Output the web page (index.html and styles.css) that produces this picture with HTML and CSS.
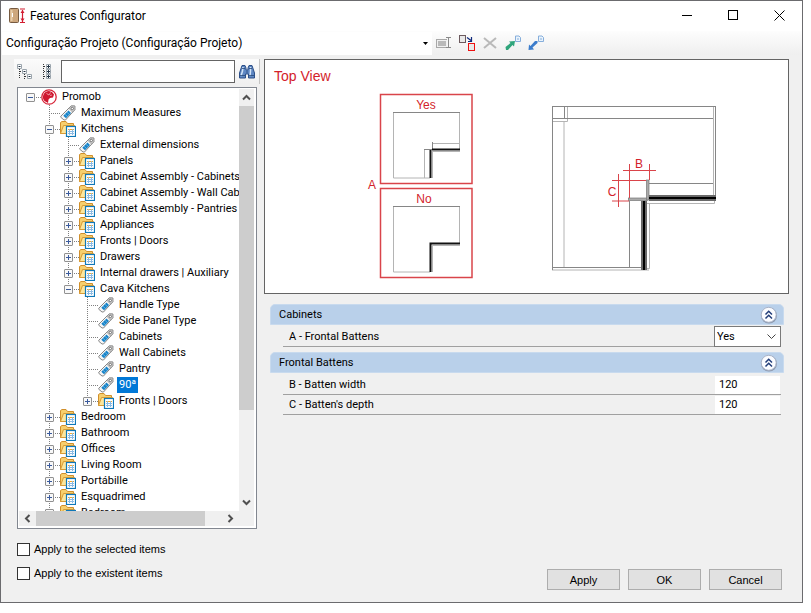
FILE: index.html
```html
<!DOCTYPE html>
<html lang="en">
<head>
    <meta charset="UTF-8">
    <meta name="viewport" content="width=device-width, initial-scale=1.0">
    <title>Features Configurator</title>
    <link rel="stylesheet" href="styles.css">
</head>
<body>
    <!-- Shared icons -->
    <svg class="sprite" aria-hidden="true">
        <symbol id="icon-tag" viewBox="0 0 16 16">
            <path d="M.8 11.200 9 3 11 1H14.800V4.800L5.500 15H4L.8 12.300Z" fill="#f6f6f6" stroke="#858585"/>
            <path d="M8.800 3.200 11.200 1H14.800V4.800L12.600 7.200Z" fill="#cfcfcf" stroke="#858585" stroke-width=".6"/>
            <path d="M3.300 10.800 8.500 5.500 11 8 6 13.200Z" fill="#1683c9"/>
            <path d="M5 9.200 7.500 11.700M7 7.200 9.400 9.700" stroke="#8cc5e8" stroke-width=".7"/>
            <circle cx="12.300" cy="3.500" r="1.200" fill="#fff" stroke="#666" stroke-width=".9"/>
        </symbol>
        <symbol id="icon-folder" viewBox="0 0 16 16">
            <path d="M.5 12.500V1.500L2 .5H6L7.500 2.500H13.500V12.500Z" fill="#f7cf6d" stroke="#d08f2c"/>
            <path d="M.5 12.500 3.500 4.500H14.500V12.500Z" fill="#fce69c" stroke="#d79b35"/>
            <rect x="6.500" y="5.500" width="9" height="10" fill="#fff" stroke="#0f78b8" stroke-width="1.200"/>
            <path d="M8 8.500H14" stroke="#f0a92e"/>
            <path d="M8 10.500H14M8 12.500H14M9.500 8V14M12.500 8V14" stroke="#8dbbe3"/>
        </symbol>
        <symbol id="icon-up" viewBox="0 0 18 18">
            <circle cx="9" cy="9.500" r="8" fill="#8c98ad"/>
            <circle cx="8.700" cy="8.800" r="7.500" fill="#fbfcff" stroke="#a9b3c8"/>
            <path d="M5.500 8.500 8.700 5.300 12 8.500M5.500 12.500 8.700 9.300 12 12.500" fill="none" stroke="#213c78" stroke-width="1.500"/>
        </symbol>
    </svg>

    <div class="window">
        <header class="titlebar">
            <svg class="app-icon" viewBox="0 0 17 16">
                <rect x=".5" y=".5" width="9" height="14" rx="1" fill="#cda77d" stroke="#765a40"/>
                <path d="M2.500 2V13" stroke="#e7cda9" stroke-width="2"/>
                <path d="M3.500 5V9" stroke="#fff"/>
                <path d="M11 1H16M11 14.500H16M13.500 2V14" stroke="#d21c30" stroke-width="1.200"/>
                <path d="M11.500 5 13.500 2 15.500 5ZM11.500 10.500 13.500 13.500 15.500 10.500Z" fill="#d21c30"/>
            </svg>
            <h1 class="title">Features Configurator</h1>
            <div class="window-controls">
                <button type="button" aria-label="Minimize"><svg viewBox="0 0 11 11"><path d="M0 5.500H10"/></svg></button>
                <button type="button" aria-label="Maximize"><svg viewBox="0 0 11 11"><rect x=".5" y=".5" width="9" height="9"/></svg></button>
                <button type="button" aria-label="Close"><svg viewBox="0 0 11 11"><path d="M.5 .5 10.500 10.500M10.500 .5 .5 10.500"/></svg></button>
            </div>
        </header>

        <div class="toolbar">
            <select class="project-select" aria-label="Project">
                <option>Configuração Projeto (Configuração Projeto)</option>
            </select>
            <button type="button" class="tool-btn" aria-label="Rename">
                <svg viewBox="0 0 18 18">
                    <rect x="1.500" y="5.500" width="12" height="8" fill="#f0f0f0" stroke="#a8a8a8"/>
                    <rect x="3" y="7" width="8" height="5" fill="#b9b9b9"/>
                    <path d="M13.500 4V13" stroke="#f6f6f6" stroke-width="3"/>
                    <path d="M11 3.500H16M11 13.500H16M13.500 4V13" stroke="#8a8a8a"/>
                </svg>
            </button>
            <button type="button" class="tool-btn" aria-label="Replace">
                <svg viewBox="0 0 18 18">
                    <rect x="1.500" y="1.500" width="6" height="7" fill="#e9e9e9" stroke="#6c5a5e"/>
                    <rect x="10.500" y="9.500" width="6" height="7" fill="#e9e9e9" stroke="#ee1111"/>
                    <path d="M9 3.500 13 6.500M13.500 3V7.500H10" fill="none" stroke="#102a7c" stroke-width="1.200"/>
                </svg>
            </button>
            <button type="button" class="tool-btn" aria-label="Delete">
                <svg viewBox="0 0 18 18">
                    <path d="M3 4 15 14M15 4 3 14" stroke="#b9b9b9" stroke-width="2"/>
                </svg>
            </button>
            <button type="button" class="tool-btn" aria-label="Export">
                <svg viewBox="0 0 18 18">
                    <path d="M11.500 2H15L16.500 3.500V7.500H11.500Z" fill="#e9f3fc" stroke="#86aedb"/>
                    <path d="M13 5H15" stroke="#86aedb"/>
                    <path d="M1.500 13 6.500 9 5 7.500 11 7 10 12.500 8.500 11 4 16 2 16Z" fill="#2fa57b"/>
                </svg>
            </button>
            <button type="button" class="tool-btn" aria-label="Import">
                <svg viewBox="0 0 18 18">
                    <path d="M11.500 2H15L16.500 3.500V7.500H11.500Z" fill="#e9f3fc" stroke="#86aedb"/>
                    <path d="M13 5H15" stroke="#86aedb"/>
                    <path d="M1.500 16 2 10.500 3.500 12 8 7 10.500 7 10.500 9 5.500 13.500 7 15.500Z" fill="#3c7dcc"/>
                </svg>
            </button>
        </div>

        <main class="content">
            <section class="sidebar">
                <div class="search-row">
                    <div class="tree-tools">
                        <button type="button" aria-label="Expand tree">
                            <svg viewBox="0 0 16 16">
                                <path d="M2.500 5V15M7.500 10V15" stroke="#333" stroke-dasharray="1 1"/>
                                <path d="M3 7.500H6M8 12.500H11" stroke="#333" stroke-dasharray="1 1"/>
                                <path d="M.5 .5H4.500V4.500H.5ZM5.500 5.500H9.500V9.500H5.500ZM10.500 10.500H14.500V14.500H10.500Z" fill="#fff" stroke="#9ba5ad"/>
                                <path d="M1.500 2.500H3.500M6.500 7.500H8.500M11.500 12.500H13.500" stroke="#234"/>
                            </svg>
                        </button>
                        <button type="button" aria-label="Collapse tree">
                            <svg viewBox="0 0 16 16">
                                <path d="M4.500 0V16" stroke="#333" stroke-dasharray="1 1"/>
                                <path d="M5 2.500H8M5 7.500H8M5 12.500H8" stroke="#333" stroke-dasharray="1 1"/>
                                <path d="M7.500 .5H11.500V4.500H7.500ZM7.500 5.500H11.500V9.500H7.500ZM7.500 10.500H11.500V14.500H7.500Z" fill="#fff" stroke="#9ba5ad"/>
                                <path d="M8 2.500H11M9.500 1V4M8 7.500H11M9.500 6V9M8 12.500H11M9.500 11V14" stroke="#234"/>
                            </svg>
                        </button>
                    </div>
                    <input class="search-input" type="text" aria-label="Search">
                    <button type="button" class="search-btn" aria-label="Find">
                        <svg viewBox="0 0 16 14">
                            <path d="M3 .5H6L7 3V5H9V3L10 .5H13L15.500 8V13H9.500V9H6.500V13H.5V8Z" fill="#5f88c4" stroke="#2c4f88"/>
                            <path d="M4 2 3.500 6 2 11M11.500 2 11.500 6 11 11" fill="none" stroke="#d3e4f7" stroke-width="1.500"/>
                            <path d="M1 10.500H6M10 10.500H15M7 7H9M3 3.500H6M10 3.500H13" stroke="#264779" stroke-width=".8"/>
                        </svg>
                    </button>
                </div>

                <div class="tree-box">
                    <div class="tree-view">
                        <ul class="tree">
                            <li>
                                <div class="node">
                                    <button type="button" class="toggle open" aria-label="Collapse"></button>
                                    <svg class="icon" viewBox="0 0 16 16">
                                        <circle cx="8" cy="8" r="7.200" fill="#fff" stroke="#d7263a" stroke-width="1.300"/>
                                        <path d="M8 2A6 6 0 0 0 3.500 12L7 14 7.500 10.500 9 9 12 8.500 13 5.500 11 3Z" fill="#cf1830"/>
                                        <path d="M5.500 4.500 8 6 9.500 3.500M9 6.500 11 6" fill="none" stroke="#f5b5bb" stroke-width=".8"/>
                                    </svg>
                                    <span class="label">Promob</span>
                                </div>
                                <ul>
                                    <li><div class="node leaf"><svg class="icon"><use href="#icon-tag"/></svg><span class="label">Maximum Measures</span></div></li>
                                    <li>
                                        <div class="node"><button type="button" class="toggle open" aria-label="Collapse"></button><svg class="icon"><use href="#icon-folder"/></svg><span class="label">Kitchens</span></div>
                                        <ul>
                                            <li><div class="node leaf"><svg class="icon"><use href="#icon-tag"/></svg><span class="label">External dimensions</span></div></li>
                                            <li><div class="node"><button type="button" class="toggle" aria-label="Expand"></button><svg class="icon"><use href="#icon-folder"/></svg><span class="label">Panels</span></div></li>
                                            <li><div class="node"><button type="button" class="toggle" aria-label="Expand"></button><svg class="icon"><use href="#icon-folder"/></svg><span class="label">Cabinet Assembly - Cabinets</span></div></li>
                                            <li><div class="node"><button type="button" class="toggle" aria-label="Expand"></button><svg class="icon"><use href="#icon-folder"/></svg><span class="label">Cabinet Assembly - Wall Cabinets</span></div></li>
                                            <li><div class="node"><button type="button" class="toggle" aria-label="Expand"></button><svg class="icon"><use href="#icon-folder"/></svg><span class="label">Cabinet Assembly - Pantries</span></div></li>
                                            <li><div class="node"><button type="button" class="toggle" aria-label="Expand"></button><svg class="icon"><use href="#icon-folder"/></svg><span class="label">Appliances</span></div></li>
                                            <li><div class="node"><button type="button" class="toggle" aria-label="Expand"></button><svg class="icon"><use href="#icon-folder"/></svg><span class="label">Fronts | Doors</span></div></li>
                                            <li><div class="node"><button type="button" class="toggle" aria-label="Expand"></button><svg class="icon"><use href="#icon-folder"/></svg><span class="label">Drawers</span></div></li>
                                            <li><div class="node"><button type="button" class="toggle" aria-label="Expand"></button><svg class="icon"><use href="#icon-folder"/></svg><span class="label">Internal drawers | Auxiliary</span></div></li>
                                            <li>
                                                <div class="node"><button type="button" class="toggle open" aria-label="Collapse"></button><svg class="icon"><use href="#icon-folder"/></svg><span class="label">Cava Kitchens</span></div>
                                                <ul>
                                                    <li><div class="node leaf"><svg class="icon"><use href="#icon-tag"/></svg><span class="label">Handle Type</span></div></li>
                                                    <li><div class="node leaf"><svg class="icon"><use href="#icon-tag"/></svg><span class="label">Side Panel Type</span></div></li>
                                                    <li><div class="node leaf"><svg class="icon"><use href="#icon-tag"/></svg><span class="label">Cabinets</span></div></li>
                                                    <li><div class="node leaf"><svg class="icon"><use href="#icon-tag"/></svg><span class="label">Wall Cabinets</span></div></li>
                                                    <li><div class="node leaf"><svg class="icon"><use href="#icon-tag"/></svg><span class="label">Pantry</span></div></li>
                                                    <li><div class="node leaf"><svg class="icon"><use href="#icon-tag"/></svg><span class="label selected">90ª</span></div></li>
                                                    <li><div class="node"><button type="button" class="toggle" aria-label="Expand"></button><svg class="icon"><use href="#icon-folder"/></svg><span class="label">Fronts | Doors</span></div></li>
                                                </ul>
                                            </li>
                                        </ul>
                                    </li>
                                    <li><div class="node"><button type="button" class="toggle" aria-label="Expand"></button><svg class="icon"><use href="#icon-folder"/></svg><span class="label">Bedroom</span></div></li>
                                    <li><div class="node"><button type="button" class="toggle" aria-label="Expand"></button><svg class="icon"><use href="#icon-folder"/></svg><span class="label">Bathroom</span></div></li>
                                    <li><div class="node"><button type="button" class="toggle" aria-label="Expand"></button><svg class="icon"><use href="#icon-folder"/></svg><span class="label">Offices</span></div></li>
                                    <li><div class="node"><button type="button" class="toggle" aria-label="Expand"></button><svg class="icon"><use href="#icon-folder"/></svg><span class="label">Living Room</span></div></li>
                                    <li><div class="node"><button type="button" class="toggle" aria-label="Expand"></button><svg class="icon"><use href="#icon-folder"/></svg><span class="label">Portábille</span></div></li>
                                    <li><div class="node"><button type="button" class="toggle" aria-label="Expand"></button><svg class="icon"><use href="#icon-folder"/></svg><span class="label">Esquadrimed</span></div></li>
                                    <li><div class="node"><button type="button" class="toggle" aria-label="Expand"></button><svg class="icon"><use href="#icon-folder"/></svg><span class="label">Bedroom</span></div></li>
                                </ul>
                            </li>
                        </ul>
                    </div>
                    <div class="scroll scroll-y">
                        <svg viewBox="0 0 15 16"><path d="M4 10 7.500 6.500 11 10"/></svg>
                        <div class="thumb"></div>
                        <svg viewBox="0 0 15 16"><path d="M4 6 7.500 9.500 11 6"/></svg>
                    </div>
                    <div class="scroll scroll-x">
                        <svg viewBox="0 0 16 15"><path d="M10 4 6.500 7.500 10 11"/></svg>
                        <div class="thumb"></div>
                        <svg viewBox="0 0 16 15"><path d="M6 4 9.500 7.500 6 11"/></svg>
                    </div>
                </div>
            </section>

            <section class="details">
                <figure class="preview">
                    <svg viewBox="0 0 523 233">
                        <text class="red heading" x="9" y="21">Top View</text>

                        <!-- A: option boxes -->
                        <g class="red-line box">
                            <rect x="115.500" y="34.500" width="91.500" height="89"/>
                            <rect x="115.500" y="128.500" width="91.500" height="89"/>
                        </g>
                        <text class="red" x="103" y="129">A</text>
                        <text class="red" x="161" y="49" text-anchor="middle">Yes</text>
                        <text class="red" x="159" y="143" text-anchor="middle">No</text>

                        <g class="gray-line">
                            <path d="M128.500 52.500V118M194.500 52.500V90M128.500 118H165M159.500 90V118M167.500 91V118M167.500 83.500H194M167 91.500H195"/>
                            <path d="M128.500 146.500V212M194.500 146.500V183M128.500 212H165M167.500 185V212M167 185.500H195"/>
                        </g>
                        <g class="dark-line">
                            <path d="M128 52.500H195M128 146.500H195M159 89.500H167M167.500 82V90"/>
                        </g>
                        <path class="thick" d="M167 89.500H195M165.500 90V118M164.500 183.500H195M165.500 183.500V212"/>

                        <!-- B / C: dimension drawing -->
                        <g class="gray-line">
                            <path d="M299 61V207M448.500 46V136M302.500 46V61.500H287.500M287 210H384M384.500 144V208.500H382M382 143.500H449.500V140"/>
                        </g>
                        <g class="dark-line">
                            <path d="M287.500 46V210M450.500 46V136M287 46.500H451M287 58.500H448M299.500 46V58M287 207.500H377M364.500 141V207M384 123.500H448"/>
                        </g>
                        <rect x="363.500" y="138" width="19" height="2.500" fill="#aaa" stroke="#777" stroke-width=".7"/>
                        <rect x="381.500" y="120" width="2.500" height="20" fill="#aaa" stroke="#777" stroke-width=".7"/>
                        <rect x="384" y="135" width="67" height="6" fill="#6a6a6a"/>
                        <rect x="384" y="137" width="67" height="2" fill="#000"/>
                        <rect x="376" y="141" width="6" height="69" fill="#6a6a6a"/>
                        <rect x="378" y="141" width="2" height="69" fill="#000"/>
                        <path class="red-line" d="M358 110.500H391M364.500 104V138M384.500 104V120M347 120.500H381M347 141H364M353.500 114V147"/>
                        <text class="red" x="374" y="108" text-anchor="middle">B</text>
                        <text class="red" x="347" y="136" text-anchor="middle">C</text>
                    </svg>
                </figure>

                <div class="properties">
                    <section class="group">
                        <div class="group-header">
                            <h2>Cabinets</h2>
                            <button type="button" aria-label="Collapse Cabinets"><svg><use href="#icon-up"/></svg></button>
                        </div>
                        <div class="group-body">
                            <div class="prop">
                                <label for="prop-a">A - Frontal Battens</label>
                                <select id="prop-a">
                                    <option>Yes</option>
                                    <option>No</option>
                                </select>
                            </div>
                        </div>
                    </section>
                    <section class="group">
                        <div class="group-header">
                            <h2>Frontal Battens</h2>
                            <button type="button" aria-label="Collapse Frontal Battens"><svg><use href="#icon-up"/></svg></button>
                        </div>
                        <div class="group-body">
                            <div class="prop">
                                <label for="prop-b">B - Batten width</label>
                                <input id="prop-b" type="text" value="120">
                            </div>
                            <div class="prop">
                                <label for="prop-c">C - Batten's depth</label>
                                <input id="prop-c" type="text" value="120">
                            </div>
                        </div>
                    </section>
                </div>
            </section>
        </main>

        <footer class="footer">
            <div class="options">
                <label><input type="checkbox">Apply to the selected items</label>
                <label><input type="checkbox">Apply to the existent items</label>
            </div>
            <div class="actions">
                <button type="button">Apply</button>
                <button type="button">OK</button>
                <button type="button">Cancel</button>
            </div>
        </footer>
    </div>
</body>
</html>
```
FILE: styles.css
```css
* {
    margin: 0;
    padding: 0;
    box-sizing: border-box;
}

body {
    background-color: #fff;
    padding: 0 8px 10px 0;
    font-family: 'Liberation Sans', Arial, sans-serif;
    font-size: 11px;
    color: #000;
}

button,
input,
select {
    font: inherit;
    color: inherit;
}

.sprite {
    display: none;
}

.window {
    display: flex;
    flex-direction: column;
    height: calc(100vh - 10px);
    border: 1px solid #6b6b6e;
    background-color: #f0f0f0;
}

/* Title bar */
.titlebar {
    display: flex;
    align-items: center;
    height: 30px;
    padding-left: 8px;
    background-color: #fff;
}

.app-icon {
    width: 17px;
    height: 16px;
}

.title {
    flex: 1;
    margin-left: 4px;
    font-family: Roboto, 'Noto Sans', sans-serif;
    font-size: 12px;
    font-weight: normal;
}

.window-controls {
    display: flex;
}

.window-controls button {
    width: 46px;
    height: 28px;
    border: none;
    background: none;
}

.window-controls svg {
    width: 11px;
    height: 11px;
    fill: none;
    stroke: #000;
}

/* Toolbar */
.toolbar {
    display: flex;
    align-items: center;
    height: 24px;
    padding-left: 1px;
    background: linear-gradient(#fdfdfd, #efefef);
}

.project-select {
    width: 430px;
    height: 23px;
    padding-left: 4px;
    border: none;
    appearance: none;
    background: #fff url("data:image/svg+xml,%3Csvg xmlns='http://www.w3.org/2000/svg' width='5' height='3'%3E%3Cpath d='M0 0H5L2.5 3Z'/%3E%3C/svg%3E") no-repeat right 4px center;
    font-family: Roboto, 'Noto Sans', sans-serif;
    font-size: 12px;
}

.tool-btn {
    width: 23px;
    height: 22px;
    border: none;
    background: none;
}

.tool-btn svg {
    display: block;
    width: 18px;
    height: 18px;
    margin: 0 auto;
    fill: none;
}

/* Main area */
.content {
    display: grid;
    grid-template-columns: 246px 1fr;
    gap: 4px;
    flex: 1;
    min-height: 0;
    padding: 4px 13px 0;
}

.sidebar {
    display: flex;
    flex-direction: column;
    min-height: 0;
}

.search-row {
    display: flex;
    align-items: center;
    height: 25px;
    margin-bottom: 3px;
    border-right: 1px solid #c4c4c4;
    background: linear-gradient(#fbfbfb, #f0f0f0);
}

.tree-tools {
    display: flex;
    gap: 6px;
    width: 47px;
    padding-left: 3px;
}

.tree-tools button,
.search-btn {
    border: none;
    background: none;
}

.tree-tools svg {
    display: block;
    width: 16px;
    height: 16px;
}

.search-input {
    flex: 1;
    min-width: 0;
    height: 23px;
    padding: 0 4px;
    border: 1px solid #646464;
    background-color: #fff;
}

.search-btn {
    width: 24px;
}

.search-btn svg {
    display: block;
    width: 16px;
    height: 14px;
    margin: 0 auto;
}

/* Tree */
.tree-box {
    display: grid;
    grid-template-columns: 1fr 15px;
    grid-template-rows: 1fr 15px;
    flex: 1;
    min-height: 0;
    margin: 0 3px;
    padding: 1px 2px 2px 1px;
    border: 1px solid #828790;
    background-color: #fff;
    font-family: Roboto, Arial, sans-serif;
}

.tree-view {
    overflow: hidden;
}

.tree,
.tree ul {
    list-style: none;
}

.tree ul {
    padding-left: 19px;
}

.tree ul > li {
    background: repeating-linear-gradient(#808080 0 1px, transparent 1px 2px) no-repeat 11px 0 / 1px 100%;
}

.tree ul ul > li:last-child {
    background-size: 1px 8px;
}

.node {
    display: flex;
    align-items: center;
    height: 16px;
    padding-left: 7px;
    white-space: nowrap;
    background: repeating-linear-gradient(90deg, #808080 0 1px, transparent 1px 2px) no-repeat 11px 8px / 11px 1px;
}

.node.leaf {
    padding-left: 22px;
}

.toggle {
    flex: none;
    width: 9px;
    height: 9px;
    margin-right: 6px;
    border: 1px solid #919191;
    border-radius: 1px;
    background:
        linear-gradient(#3a5a9c, #3a5a9c) no-repeat center / 5px 1px,
        linear-gradient(#3a5a9c, #3a5a9c) no-repeat center / 1px 5px,
        #f8f8f8;
}

.toggle.open {
    background:
        linear-gradient(#3a5a9c, #3a5a9c) no-repeat center / 5px 1px,
        #f8f8f8;
}

.icon {
    flex: none;
    width: 16px;
    height: 16px;
    margin-right: 3px;
}

.label {
    padding: 0 2px;
    line-height: 16px;
}

.label.selected {
    background-color: #0078d7;
    color: #fff;
}

/* Scrollbars */
.scroll {
    display: flex;
    background-color: #f0f0f0;
}

.scroll svg {
    flex: none;
    fill: none;
    stroke: #505050;
    stroke-width: 2;
}

.scroll .thumb {
    background-color: #cdcdcd;
}

/* The vertical bar also fills the corner under it */
.scroll-y {
    grid-column: 2;
    grid-row: 1 / 3;
    flex-direction: column;
    justify-content: space-between;
    padding-bottom: 15px;
}

.scroll-y svg {
    width: 15px;
    height: 17px;
}

.scroll-y .thumb {
    flex: 0 0 72%;
    margin-bottom: auto;
}

.scroll-x {
    grid-column: 1;
    grid-row: 2;
    justify-content: space-between;
}

.scroll-x svg {
    width: 17px;
    height: 15px;
}

.scroll-x .thumb {
    flex: 0 0 77%;
    margin-right: auto;
}

/* Preview drawing */
.preview {
    border: 1px solid #646464;
    background-color: #fff;
}

.preview svg {
    display: block;
    width: 100%;
    height: auto;
    fill: none;
}

.preview text {
    font-size: 12px;
}

.preview .heading {
    font-size: 14px;
}

.red {
    fill: #d3222a;
}

.red-line {
    stroke: #d9444a;
}

.red-line.box {
    stroke-width: 1.5;
}

.gray-line {
    stroke: #b4b4b4;
}

.dark-line {
    stroke: #868686;
}

.thick {
    stroke: #111;
    stroke-width: 2;
}

/* Properties */
.properties {
    display: flex;
    flex-direction: column;
    gap: 5px;
    margin: 10px 5px 0 6px;
    font-family: Roboto, Arial, sans-serif;
}

.group-header {
    display: flex;
    align-items: center;
    justify-content: space-between;
    height: 21px;
    padding: 0 5px 0 8px;
    border: 1px solid #c8daee;
    border-radius: 5px 5px 0 0;
    background-color: #b9d0ea;
}

.group-header h2 {
    font-size: 11px;
    font-weight: normal;
}

.group-header button {
    border: none;
    background: none;
}

.group-header svg {
    display: block;
    width: 18px;
    height: 18px;
}

.group-body {
    padding: 2px 3px 0 13px;
}

.prop {
    display: flex;
    align-items: center;
    justify-content: space-between;
    height: 20px;
    padding-left: 6px;
    border-bottom: 1px solid #a0a0a0;
}

.prop input {
    width: 65px;
    height: 18px;
    margin-right: 1px;
    padding-left: 4px;
    border: none;
    background-color: #fff;
}

.prop select {
    width: 67px;
    height: 21px;
    margin: -1px 0;
    padding-left: 2px;
    border: 1px solid #7a7a7a;
    appearance: none;
    background: #fff url("data:image/svg+xml,%3Csvg xmlns='http://www.w3.org/2000/svg' width='9' height='6' fill='none' stroke='%23444'%3E%3Cpath d='M.5 .5L4.500 4.500L8.500 .5'/%3E%3C/svg%3E") no-repeat right 4px center;
}

/* Footer */
.footer {
    display: flex;
    align-items: flex-end;
    justify-content: space-between;
    padding: 12px 20px 12px 16px;
}

.options {
    display: flex;
    flex-direction: column;
    gap: 8px;
    padding-bottom: 9px;
}

.options label {
    display: flex;
    align-items: center;
    gap: 4px;
    height: 16px;
}

.options input {
    width: 13px;
    height: 13px;
    border: 1px solid #333;
    appearance: none;
    background-color: #fff;
}

.options input:checked {
    background-color: #0078d7;
}

.actions {
    display: flex;
    gap: 8px;
}

.actions button {
    width: 73px;
    height: 21px;
    border: 1px solid #adadad;
    background-color: #e1e1e1;
}
```
